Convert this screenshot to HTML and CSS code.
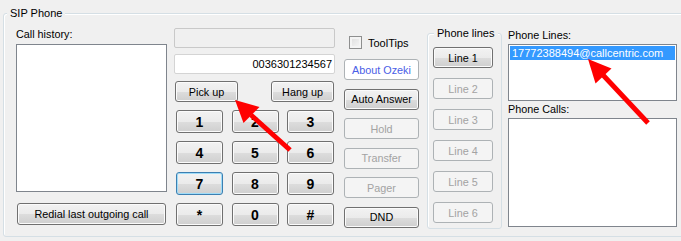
FILE: index.html
```html
<!DOCTYPE html>
<html>
  <head>
    <title>SIP Phone</title>
    <link rel="stylesheet" href="styles.css">
  </head>
  <body>
    <div class="window">
      <div class="group sip-group">
        <span class="legend">SIP Phone</span>

        <div class="col history-col">
          <label class="label">Call history:</label>
          <div class="listbox history-list"></div>
          <button class="btn redial-btn">Redial last outgoing call</button>
        </div>

        <div class="col dialer-col">
          <div class="textbox disabled-box"></div>
          <div class="textbox number-box">0036301234567</div>
          <div class="call-row">
            <button class="btn call-btn">Pick up</button>
            <button class="btn call-btn">Hang up</button>
          </div>
          <div class="keypad">
            <button class="btn key">1</button>
            <button class="btn key">2</button>
            <button class="btn key">3</button>
            <button class="btn key">4</button>
            <button class="btn key">5</button>
            <button class="btn key">6</button>
            <button class="btn key focused">7</button>
            <button class="btn key">8</button>
            <button class="btn key">9</button>
            <button class="btn key">*</button>
            <button class="btn key">0</button>
            <button class="btn key">#</button>
          </div>
        </div>

        <div class="col options-col">
          <div class="check-row">
            <span class="checkbox"></span>
            <span>ToolTips</span>
          </div>
          <div class="option-list">
            <button class="btn link-btn">About Ozeki</button>
            <button class="btn">Auto Answer</button>
            <button class="btn" disabled>Hold</button>
            <button class="btn" disabled>Transfer</button>
            <button class="btn" disabled>Pager</button>
            <button class="btn">DND</button>
          </div>
        </div>

        <div class="group lines-group">
          <span class="legend">Phone lines</span>
          <button class="btn line-btn">Line 1</button>
          <button class="btn line-btn" disabled>Line 2</button>
          <button class="btn line-btn" disabled>Line 3</button>
          <button class="btn line-btn" disabled>Line 4</button>
          <button class="btn line-btn" disabled>Line 5</button>
          <button class="btn line-btn" disabled>Line 6</button>
        </div>

        <div class="col lists-col">
          <label class="label">Phone Lines:</label>
          <div class="listbox lines-list">
            <div class="list-item selected">17772388494@callcentric.com</div>
          </div>
          <label class="label calls-label">Phone Calls:</label>
          <div class="listbox calls-list"></div>
        </div>
      </div>

      <!-- callout arrows drawn over the form -->
      <svg class="arrows" width="681" height="241" viewBox="0 0 681 241">
        <line x1="290" y1="150" x2="251" y2="115" stroke="#f00" stroke-width="5"/>
        <polygon points="235,100 259.5,107 243.5,123" fill="#f00"/>
        <line x1="648" y1="123" x2="603" y2="75" stroke="#f00" stroke-width="5"/>
        <polygon points="588,59 611.5,68.5 595.5,83.5" fill="#f00"/>
      </svg>
    </div>
  </body>
</html>
```

FILE: styles.css
```css
body {
  margin: 0;
  background: #f0f0f0;
  font-family: "Liberation Sans", Arial, sans-serif;
  font-size: 10.5px;
  color: #000;
  overflow: hidden;
}
.window {
  position: relative;
  width: 681px;
  height: 241px;
  overflow: hidden;
}
.group {
  position: relative;
  border: 1px solid #d5dfe5;
  border-radius: 3px;
  box-shadow: inset 1px 1px 0 #fff;
}
.legend {
  position: absolute;
  top: -8px;
  background: #f0f0f0;
  padding: 0 3px;
  line-height: 14px;
  font-size: 11px;
  white-space: nowrap;
}
.sip-group {
  display: flex;
  align-items: flex-start;
  box-sizing: border-box;
  margin: 13px 0 0 3px;
  width: 720px;
  height: 224px;
}
.sip-group > .legend {
  left: 3px;
}
.col {
  display: flex;
  flex-direction: column;
}
.label {
  display: block;
  line-height: 13px;
  height: 13px;
  font-size: 10.8px;
  white-space: nowrap;
}
.listbox {
  box-sizing: border-box;
  background: #fff;
  border: 1px solid #7f858d;
  padding: 1px;
}

/* buttons */
.btn {
  box-sizing: border-box;
  height: 21px;
  padding: 0;
  border: 1px solid #707070;
  border-radius: 3px;
  background: linear-gradient(#f2f2f2 0%, #ebebeb 50%, #dddddd 51%, #cfcfcf 100%);
  box-shadow: inset 0 0 0 1px #fbfbfb;
  font-family: "Liberation Sans", Arial, sans-serif;
  font-size: 10.8px;
  color: #000;
  white-space: nowrap;
}
.btn:disabled {
  border-color: #adb2b5;
  background: #f4f4f4;
  box-shadow: none;
  color: #a3a3a3;
}
.link-btn {
  border-color: #adb2b5;
  background: #fff;
  box-shadow: none;
  color: #4a5ee6;
}

/* call history */
.history-col {
  margin-left: 12px;
  width: 151px;
  padding-top: 14px;
}
.history-list {
  margin-top: 3px;
  height: 148px;
}
.redial-btn {
  margin: 11px 1px 0 1px;
  height: 22px;
}

/* dialer */
.dialer-col {
  margin-left: 7px;
  width: 161px;
  padding-top: 14px;
}
.textbox {
  box-sizing: border-box;
  height: 20px;
  border: 1px solid #d4d4d4;
  border-radius: 2px;
  background: #fff;
  text-align: right;
  font-size: 11px;
  line-height: 18px;
  padding: 0 2px;
}
.disabled-box {
  background: #f0f0f0;
  border-color: #c9c9c9;
}
.number-box {
  margin-top: 6px;
}
.call-row {
  display: flex;
  justify-content: space-between;
  margin-top: 7px;
  padding: 0 1px;
}
.call-btn {
  width: 63px;
}
.keypad {
  display: grid;
  grid-template-columns: 47px 47px 47px;
  justify-content: space-between;
  row-gap: 8px;
  margin-top: 8px;
  padding: 0 1px 0 2px;
}
.key {
  height: 23px;
  font-size: 14px;
  font-weight: bold;
}
.key.focused {
  border-color: #3c7fb1;
  box-shadow: inset 0 0 0 1px #9fdcf8;
}

/* options */
.options-col {
  margin-left: 9px;
  width: 75px;
  padding-top: 21px;
}
.check-row {
  display: flex;
  align-items: center;
  gap: 6px;
  height: 15px;
  padding-left: 5px;
  font-size: 11px;
}
.checkbox {
  box-sizing: border-box;
  width: 13px;
  height: 13px;
  border: 1px solid #8e8f8f;
  background: linear-gradient(135deg, #dcdcdc, #f8f8f8);
  box-shadow: inset 0 0 0 2px #f4f4f4;
}
.option-list {
  display: flex;
  flex-direction: column;
  gap: 8.6px;
  margin-top: 9px;
}

/* phone lines group */
.lines-group {
  box-sizing: border-box;
  display: flex;
  flex-direction: column;
  gap: 10px;
  margin: 19px 0 0 8px;
  width: 75px;
  height: 196px;
  padding: 13px 0 0 5px;
}
.lines-group > .legend {
  left: 6px;
}
.line-btn {
  width: 60px;
}

/* phone lines / calls lists */
.lists-col {
  margin-left: 6px;
  width: 169px;
  padding-top: 15px;
}
.lines-list {
  margin-top: 2px;
  height: 57px;
}
.list-item {
  height: 14px;
  line-height: 14px;
  padding-left: 2px;
  font-size: 11px;
  white-space: nowrap;
}
.list-item.selected {
  background: #3399ff;
  color: #fff;
}
.calls-label {
  margin-top: 2px;
}
.calls-list {
  margin-top: 2px;
  height: 109px;
}

.arrows {
  position: absolute;
  left: 0;
  top: 0;
  pointer-events: none;
}
```
